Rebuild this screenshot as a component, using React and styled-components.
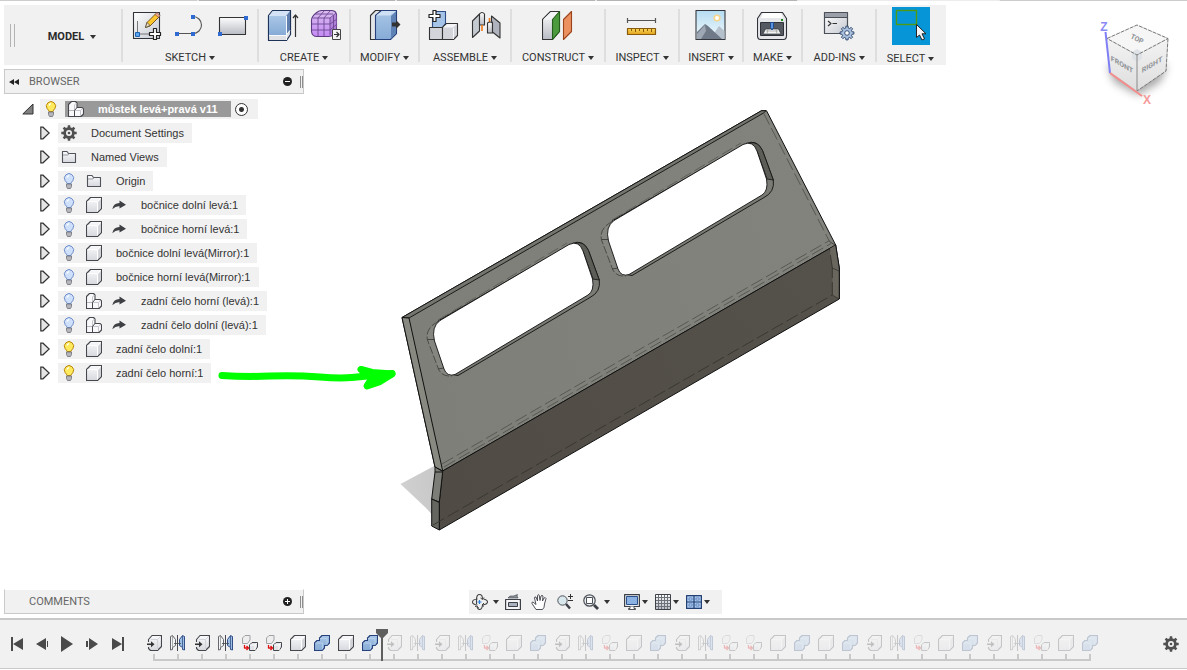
import React from 'react';
import styled, { createGlobalStyle, css } from 'styled-components';

const GlobalStyle = createGlobalStyle`
  * { box-sizing: border-box; }
  body {
    margin: 0;
    background: #fff;
    color: #333;
    font-family: Roboto, "Liberation Sans", sans-serif;
    font-size: 11px;
    line-height: 14px;
  }
  ul, ol { list-style: none; margin: 0; padding: 0; }
  svg { display: block; flex: none; }
`;

const panelGrey = '#f1f1f1';
const lineGrey = '#c9c9c9';

/* ---------- layout ---------- */

const Page = styled.div`
  position: relative;
  display: flex;
  flex-direction: column;
  min-height: 100vh;
  overflow: hidden;
`;

const TabStrip = styled.div`
  display: flex;
  gap: 2px;
  height: 1px;
  margin-bottom: 4px;
  background: #e6e6e6;
`;

const TabEdge = styled.div`
  flex: ${(p) => p.$grow} 1 0;
  background: ${(p) => p.$color};
`;

const plainButton = css`
  display: flex;
  align-items: center;
  justify-content: center;
  margin: 0;
  padding: 0;
  border: 0;
  background: none;
  color: inherit;
  font: inherit;
  cursor: pointer;
`;

const Toolbar = styled.header`
  display: flex;
  align-self: flex-start;
  height: 60px;
  margin-left: 4px;
  padding-right: 2px;
  background: ${panelGrey};
`;

const Grip = styled.span`
  width: 5px;
  height: ${(p) => p.$h}px;
  border: solid #b4b4b4;
  border-width: 0 1px;
`;

const Workspaces = styled.div`
  display: flex;
  align-items: center;
  width: 117px;
  padding-left: 6px;
`;

const WorkspaceButton = styled.button`
  ${plainButton}
  flex: 1;
  gap: 6px;
  padding: 3px 0 0 8px;
  color: #2b2b2b;
  font-weight: 700;
`;

const Group = styled.section`
  position: relative;
  display: flex;
  flex-direction: column;
  align-items: center;
  gap: 7px;
  width: ${(p) => p.$w}px;
  padding: 2px 0 0 2px;

  &::before {
    content: '';
    position: absolute;
    left: 0;
    top: 4px;
    width: 2px;
    height: 53px;
    background: #dedede;
  }
`;

const Tools = styled.div`
  display: flex;
  height: 38px;
`;

const ToolButton = styled.button`
  ${plainButton}
  width: ${(p) => (p.$active ? 38 : 43)}px;
  background: ${(p) => (p.$active ? '#0696d7' : 'none')};
`;

const MenuButton = styled.button`
  ${plainButton}
  gap: 3px;
  color: #333;
`;

const CaretShape = styled.span`
  width: 0;
  height: 0;
  border: 3px solid transparent;
  border-top: 4px solid #333;
  border-bottom: 0;
`;

const Viewport = styled.main`
  position: relative;
  display: flex;
  flex: 1;
  flex-direction: column;
  padding: 4px 0 4px 4px;
`;

const Scene = styled.svg`
  position: absolute;
  left: ${(p) => p.$x}px;
  top: ${(p) => p.$y}px;
  pointer-events: none;
`;

const ViewCube = styled.svg`
  position: absolute;
  right: 7px;
  top: 10px;
`;

const Panel = styled.div`
  display: flex;
  align-items: center;
  width: 300px;
  height: 25px;
  padding-left: 24px;
  border: 1px solid ${lineGrey};
  border-top-color: ${(p) => (p.$open ? 'transparent' : lineGrey)};
  background: ${panelGrey};
  background-clip: padding-box;
  color: #666;
`;

const CollapseButton = styled.button`
  ${plainButton}
  width: 24px;
  margin-left: -24px;
  padding-right: 6px;
`;

const RoundButton = styled.button`
  ${plainButton}
  margin: 0 8px 0 auto;
`;

const PanelGrip = styled(Grip)`
  width: 3px;
  border-color: #8e8e8e;
`;

const Tree = styled.ul`
  display: flex;
  flex-direction: column;
  gap: 4px;
  padding: 5px 0 0 18px;
  font-family: "Liberation Sans", Arial, sans-serif;
`;

const TreeRow = styled.li`
  display: flex;
  align-items: center;
  height: 20px;
  padding-left: ${(p) => (p.$root ? 0 : 18)}px;
`;

const Toggle = styled.button`
  ${plainButton}
  justify-content: flex-start;
  width: 18px;
`;

const RowBody = styled.div`
  display: flex;
  align-items: center;
  gap: 3px;
  height: 20px;
  padding-right: 8px;
  background: ${panelGrey};
`;

const Slot = styled.span`
  display: flex;
  justify-content: center;
  width: 22px;
`;

const RowLabel = styled.span`
  margin-left: 8px;
  white-space: nowrap;
`;

const ActiveName = styled.div`
  display: flex;
  align-items: center;
  gap: 11px;
  height: 16px;
  padding-right: 13px;
  background: #999;
  color: #fff;
  font-weight: 700;
  white-space: nowrap;
`;

const ActiveRadio = styled.input`
  appearance: none;
  width: 13px;
  height: 13px;
  margin: 0 2px 0 1px;
  border: 1px solid #333;
  border-radius: 50%;
  background: radial-gradient(circle, #333 0 2px, #fff 3px);
`;

const BottomRow = styled.div`
  display: grid;
  grid-template-columns: 1fr auto 1fr;
  align-items: end;
  margin-top: auto;
`;

const NavBar = styled.nav`
  display: flex;
  align-items: center;
  height: 24px;
  padding: 0 12px 0 3px;
  background: ${panelGrey};
`;

const NavButton = styled.button`
  ${plainButton}
  gap: ${(p) => p.$gap || 0}px;
  margin-left: ${(p) => p.$before || 0}px;
`;

const Timeline = styled.footer`
  display: flex;
  align-items: stretch;
  height: 51px;
  margin-bottom: 1px;
  padding: 0 8px 0 4px;
  border-top: 2px solid ${lineGrey};
  border-bottom: 1px solid ${lineGrey};
  background: ${panelGrey};
`;

const Playback = styled.div`
  display: flex;
  width: 138px;
`;

const PlayButton = styled.button`
  ${plainButton}
  width: 25px;
`;

const Features = styled.ol`
  display: flex;
  flex: 1;
  padding-top: 15px;
`;

const Feature = styled.li`
  position: relative;
  display: flex;
  flex-direction: column;
  align-items: center;
  width: 24px;

  & > svg:first-child { opacity: ${(p) => (p.$future ? 0.25 : 1)}; }
`;

const Tick = styled.span`
  width: 2px;
  height: 5px;
  margin-top: 3px;
  background: ${lineGrey};
`;

const Track = styled.span`
  align-self: stretch;
  height: 2px;
  margin-left: ${(p) => (p.$first ? 11 : 0)}px;
  margin-right: ${(p) => (p.$last ? 11 : 0)}px;
  background: ${lineGrey};
`;

const Marker = styled.svg`
  position: absolute;
  right: -6px;
  top: -6px;
  z-index: 1;
`;

const SettingsButton = styled.button`
  ${plainButton}
  width: 17px;
`;

/* ---------- gradients shared by the icons ---------- */

const Gradients = () => (
  <svg width="0" height="0" style={{ position: 'absolute' }} aria-hidden="true">
    <defs>
      <linearGradient id="steel" x1="0" y1="0" x2="0" y2="1">
        <stop offset="0" stopColor="#fdfdfd" /><stop offset="1" stopColor="#b9bcc4" />
      </linearGradient>
      <linearGradient id="page" x1="0" y1="0" x2="1" y2="1">
        <stop offset="0" stopColor="#fff" /><stop offset="1" stopColor="#c4c8d0" />
      </linearGradient>
      <linearGradient id="blue" x1="0" y1="0" x2="0" y2="1">
        <stop offset="0" stopColor="#a9c6e6" /><stop offset="1" stopColor="#86abd6" />
      </linearGradient>
      <linearGradient id="soft" x1="0" y1="0" x2="0" y2="1">
        <stop offset="0" stopColor="#fbfbfc" /><stop offset="1" stopColor="#d6d8de" />
      </linearGradient>
      <linearGradient id="sky" x1="0" y1="0" x2="0" y2="1">
        <stop offset="0" stopColor="#b5dcf2" /><stop offset="1" stopColor="#f4fafc" />
      </linearGradient>
      <linearGradient id="purple" x1="0" y1="0" x2="0" y2="1">
        <stop offset="0" stopColor="#d9bdf0" /><stop offset="1" stopColor="#c58af5" />
      </linearGradient>
      <linearGradient id="gold" x1="0" y1="0" x2="0" y2="1">
        <stop offset="0" stopColor="#fbd75c" /><stop offset="1" stopColor="#e0a21a" />
      </linearGradient>
    </defs>
  </svg>
);

const Caret = () => <CaretShape aria-hidden="true" />;

const Big = ({ children }) => (
  <svg width="32" height="32" viewBox="0 0 32 32" fill="none" strokeLinejoin="round">{children}</svg>
);
const Small = ({ children, w = 16 }) => (
  <svg width={w} height="16" viewBox={`0 0 ${w} 16`} fill="none" strokeLinejoin="round">{children}</svg>
);

const plus = 'M22.500 18.500h3v4h4v3h-4v4h-3v-4h-4v-3h4z';

function gearPath(cx, cy, outer, inner, teeth) {
  const pts = [];
  const step = (Math.PI * 2) / teeth;
  for (let i = 0; i < teeth; i += 1) {
    const a = i * step - Math.PI / 2;
    [[-0.3, inner], [-0.2, outer], [0.2, outer], [0.3, inner]].forEach(([o, r]) => {
      pts.push(`${(cx + r * Math.cos(a + o * step)).toFixed(2)} ${(cy + r * Math.sin(a + o * step)).toFixed(2)}`);
    });
  }
  return `M${pts.join('L')}Z`;
}

/* ---------- toolbar icons ---------- */

const NewSketch = () => (
  <Big>
    <rect x="2.5" y="2.5" width="26" height="26" fill="url(#page)" stroke="#2f3238" strokeWidth="1.1" />
    <path d="M6.500 11v13h14" stroke="#777" />
    <rect x="4.500" y="22.500" width="4" height="4" fill="#58a6ec" stroke="#1f62b5" />
    <path d="M14.500 17.500l1.500-5L25 3.500l3.500 3-9.500 9.500z" fill="#fbc62e" stroke="#6b4a12" strokeWidth=".9" />
    <path d="M24 4.500l3.500 3 1.500-2-3-3z" fill="#e6a58c" stroke="#7a4a3a" strokeWidth=".6" />
    <path d="M14.500 17.500l1.500-5 3 3z" fill="#f2e0c0" stroke="#444" strokeWidth=".7" />
    <path d={plus} fill="#fff" stroke="#222" strokeWidth="1.200" />
  </Big>
);
const ArcTool = () => (
  <Big>
    <path d="M3 23.500h16a8.500 8.500 0 0 0 0-17" stroke="#555" strokeWidth="1.100" />
    <path d="M17 5h4v4h-4zM17 22h4v4h-4zM1 22h4v4H1z" fill="#2f6bd0" />
  </Big>
);
const RectTool = () => (
  <Big>
    <rect x="2.500" y="7.500" width="26" height="17" fill="url(#steel)" stroke="#333" strokeWidth="1.100" />
    <path d="M27 6h4v4h-4zM1 22h4v4H1z" fill="#2f6bd0" />
  </Big>
);
const Extrude = () => (
  <Big>
    <path d="M1.500 30.500V5.500l4-5h18v24l-4 6z" fill="#dfe1e5" stroke="#1f3358" strokeWidth="1.200" />
    <path d="M2 25V6h17v19z" fill="url(#blue)" />
    <path d="M2 6l4-5h17l-4 5z" fill="#d3e2f4" />
    <path d="M19 6l4-5v19l-4 5z" fill="#5f7fae" />
    <path d="M2 25.500h17l4-5M19.500 6v24" stroke="#f6f8fb" />
    <path d="M28.500 27V5M26 8l2.500-3L31 8" stroke="#333" strokeWidth="1.200" />
  </Big>
);
const Form = () => (
  <Big>
    <path d="M1.500 10Q2 6 6 3 9 .5 12 .5h9q5 0 5.500 4v14q0 4-3 6-2 2-5 2H7q-5 0-5.500-5z" fill="url(#purple)" stroke="#5b3a80" strokeWidth="1.100" />
    <path d="M20 9l6-6q2 9 0 17l-6 5z" fill="#a06cc9" opacity=".6" />
    <path d="M2 14h18l7-5M2 20h18l7-6M8 26V8l6-7M14 26V8l6-7M3 8h17v17M20 8l6-5M5 4h18M23.500 5v18" stroke="#6b4792" strokeWidth=".9" />
    <rect x="22.500" y="19.500" width="8" height="10" fill="#f4f4f4" stroke="#444" />
    <path d="M24 24.500h5M26.500 22l2.500 2.500-2.500 2.500" stroke="#333" strokeWidth="1.200" />
  </Big>
);
const PressPull = () => (
  <Big>
    <path d="M1.500 29.500V5.500l5-5h6l-5 5v24z" fill="#e2e4e8" stroke="#333" strokeWidth="1.100" />
    <path d="M6.500 29.500V5.500l6-5h15v23l-6 6z" fill="url(#blue)" stroke="#25407a" strokeWidth="1.100" />
    <path d="M7 5.500l6-4.500h14l-6 4.500z" fill="#cfe0f5" />
    <path d="M22 6l5-4.500V23l-5 6z" fill="#5f82b6" />
    <path d="M23 12.500h4V10l4.500 4.500L27 19v-2.500h-4z" fill="#333" />
  </Big>
);
const NewComponent = () => (
  <Big>
    <path d="M4.500 17.500V4.500l4-3h9v12l-3 4z" fill="#a5c4e8" stroke="#2c4d86" strokeWidth="1.100" />
    <path d="M1.500 29.500V17.500h13v12z" fill="#d3d5db" stroke="#333" strokeWidth="1.100" />
    <path d="M14.500 29.500V17.500l4-4h11v12l-4 4z" fill="#d3d5db" stroke="#333" strokeWidth="1.100" />
    <path d="M15 17.500l4-3.500h10l-4 3.500z" fill="#f5f5f7" />
    <path d="M25.500 18v11" stroke="#f5f5f7" />
    <path d="M5 .5h3v4h4v3H8v4H5v-4H1v-3h4z" fill="#fff" stroke="#222" strokeWidth="1.200" />
  </Big>
);
const Joint = () => (
  <Big>
    <path d="M1.500 27.500V11l7-7v17z" fill="#c5c9d0" stroke="#333" strokeWidth="1.100" />
    <path d="M8.500 15V4q2.500-3 5 0v11z" fill="url(#steel)" stroke="#333" strokeWidth="1.100" />
    <path d="M11 15v6M18.500 8v7" stroke="#f07a1a" strokeWidth="1.600" />
    <path d="M16.500 23V13q2.500-2 5 0v10z" fill="url(#steel)" stroke="#333" strokeWidth="1.100" />
    <path d="M20.500 11V6l8.500 7v15l-7.500-6v-9z" fill="#aeb3bd" stroke="#333" strokeWidth="1.100" />
  </Big>
);
const OffsetPlane = () => (
  <Big>
    <path d="M.5 29.500V9.500l8-8h9v20l-7 8z" fill="url(#steel)" stroke="#333" strokeWidth="1.100" />
    <path d="M1 9.500l8-7.500h8l-7 7.500z" fill="#f4f5f7" />
    <path d="M10.500 29.500V9.500l7-8v20z" fill="#4c9a3e" stroke="#245c1b" strokeWidth="1.100" />
    <path d="M21.500 29.500V9.500l8-8v20z" fill="#ec9060" stroke="#9b441c" strokeWidth="1.100" />
  </Big>
);
const Measure = () => (
  <Big>
    <path d="M1.500 10.500h28M1.500 8v5M29.500 8v5" stroke="#555" strokeWidth="1.200" />
    <rect x="1.500" y="18.500" width="28" height="6" fill="url(#gold)" stroke="#8a5a0c" strokeWidth="1.200" />
    <path d="M5.500 19v2M9.500 19v3M13.500 19v2M17.500 19v3M21.500 19v2M25.500 19v3" stroke="#8a5a0c" />
  </Big>
);
const InsertImage = () => (
  <Big>
    <rect x="1" y=".5" width="29" height="29" fill="url(#sky)" stroke="#33373d" strokeWidth="1.100" />
    <circle cx="22" cy="8" r="2.800" fill="#fff" stroke="#f8d58a" strokeWidth="1.600" />
    <path d="M15 29L24 16l5.500 5v8z" fill="#b4c0cc" />
    <path d="M2 22l8-8 3 2 14 13H2z" fill="#6f7988" />
    <path d="M2 24l8-9 1 6-5 8H2z" fill="#9ea7b4" />
  </Big>
);
const Printer = () => (
  <Big>
    <path d="M.5 8.500L4.500 2.500h21l4 6v17q0 4-3 4h-23q-3 0-3-4z" fill="#e4e6ea" stroke="#2f3238" strokeWidth="1.100" />
    <path d="M4 8l2-5h18l2 5z" fill="#fff" />
    <rect x="3.500" y="12.500" width="23" height="13" fill="#555a62" stroke="#2f3238" />
    <path d="M6 24l2.500-5h13l2.500 5z" fill="#f2f3f5" stroke="#30343a" strokeWidth=".7" />
    <path d="M9 21h12M11 19l-1 5M19 19l1 5" stroke="#999" strokeWidth=".7" />
    <path d="M13.500 12.500h3v5l-1.500 2.500-1.500-2.500z" fill="#5b94de" stroke="#1e4c92" />
    <rect x="24" y="9" width="2" height="2" fill="#1b8a1b" />
  </Big>
);
const Scripts = () => (
  <Big>
    <rect x="1.500" y="2.500" width="23" height="21" fill="url(#page)" stroke="#4a4f58" strokeWidth="1.200" />
    <path d="M2 3h22v4H2z" fill="#9a9fa8" />
    <path d="M2 7.500h22" stroke="#4a4f58" />
    <path d="M5 11l3 2.500L5 16M9.500 13.500H14" stroke="#333" strokeWidth="1.100" />
    <path d={gearPath(24, 23, 7, 5.2, 8)} fill="#a9c0de" stroke="#2d4468" strokeWidth=".9" />
    <circle cx="24" cy="23" r="2.300" fill="#fff" stroke="#2d4468" strokeWidth=".9" />
  </Big>
);
const SelectIcon = () => (
  <svg width="38" height="38" viewBox="0 0 38 38">
    <rect x="4.500" y="3.500" width="20" height="14" fill="none" stroke="#4f9a12" strokeWidth="1.400" />
    <path d="M24.500 17.500v13l3-2.500 2.500 5 2.500-1.200-2.500-5h4z" fill="#f4f4f6" stroke="#222" />
  </svg>
);

/* ---------- small icons ---------- */

const boxOutline = 'M.5 4.500L4.500.5h11v11l-4 4H.5z';

const BoxIcon = () => (
  <Small>
    <path d={boxOutline} fill="url(#soft)" stroke="#45474c" strokeWidth="1.100" />
    <path d="M1.500 4.500h10v10M11.500 4.500l3-3" stroke="#fff" />
    <path d="M12.200 5L15 2v9l-2.800 3z" fill="#d0d2d8" />
  </Small>
);
const PartsIcon = ({ w = 16 }) => (
  <Small w={w}>
    <path d="M.5 15.500V3.500l3-3h4l1.500 1.500v4.500h5l1.500 1.500v5l-2.500 2.500z" fill="#f9f9fb" stroke="#45474c" strokeWidth="1.100" />
    <path d="M1 9.500h5.500" stroke="#b4b6bc" />
    <path d="M6.500 15V4l2-2" stroke="#c4c6cc" />
    <path d="M9 6.500L6.500 9.500V15" stroke="#45474c" />
    <path d="M7 9.500h5.500V15M12.500 9.500l2-2" stroke="#c4c6cc" />
  </Small>
);
const Bulb = ({ on }) => (
  <svg width="12" height="16" viewBox="0 0 12 16" fill="none">
    <path d="M4 10.500Q3.800 9 2.200 7.800A4.600 4.600 0 1 1 9.800 7.800Q8.200 9 8 10.500z" fill={on ? '#ffe95c' : '#cfe0fb'} stroke={on ? '#b8860b' : '#6f8fc9'} />
    <path d="M4 4.500q.5-1.500 2-1.800" stroke="#fff" strokeWidth="1.200" />
    <path d="M3.500 11h5v2.500L7.500 15.500h-3l-1-2z" fill="#b4b6bb" stroke="#6d6f76" strokeWidth=".8" />
  </svg>
);
const Folder = () => (
  <Small>
    <path d="M1.500 13.500V2.500h4.500l1.500 2h7v9z" fill="url(#soft)" stroke="#50535a" strokeWidth="1.100" />
    <path d="M2 6h5l1-1.500" stroke="#8d9098" strokeWidth=".9" />
  </Small>
);
const Gear = () => (
  <Small>
    <path d={`${gearPath(8, 8, 7.8, 5.8, 8)}M8 5a3 3 0 1 0 0 6 3 3 0 0 0 0-6z`} fill="#505050" fillRule="evenodd" />
    <circle cx="8" cy="8" r="1.300" fill="#505050" />
  </Small>
);
const LinkArrow = () => (
  <svg width="14" height="10" viewBox="0 0 14 10"><path d="M.3 9.200Q1.500 3 7.500 3V.5L14 4.800 7.500 8.500V6.300Q3.500 6 .3 9.200z" fill="#3f4044" /></svg>
);
const Closed = () => (
  <svg width="10" height="14" viewBox="0 0 10 14"><path d="M.8 1.200h2.200L9.200 7 3 12.800H.8z" fill="#e6e6e6" stroke="#333" strokeWidth="1.200" /></svg>
);
const Opened = () => (
  <svg width="12" height="12" viewBox="0 0 12 12"><path d="M11 1v10H.8z" fill="#808080" stroke="#333" /></svg>
);

const InsertStep = () => (
  <Small>
    <path d="M2.500 7V4.500L6 .5h9.500v11l-4 4h-7l-2-2V12" fill="url(#soft)" stroke="#45474c" strokeWidth="1.100" />
    <path d="M11.500 15V4.500H5M11.500 4.500L15 1" stroke="#d2d4d9" />
    <path d="M1 8.500h4V6.200l3.500 3-3.500 3v-2.200H1z" fill="#333" />
  </Small>
);
const MirrorStep = () => (
  <Small>
    <path d="M.5 15V1.500L2.500.5l3 4v6l-3 2v2z" fill="#f3f4f6" stroke="#55575c" strokeWidth=".9" />
    <path d="M2.500 1v11" stroke="#888" strokeWidth=".7" />
    <path d="M7.500 0v16" stroke="#45474c" />
    <path d="M14.500 15V1.500L12.500.5l-3 4v6l3 2v2z" fill="#9dbfe6" stroke="#25407a" strokeWidth=".9" />
    <path d="M12.500 1v11" stroke="#25407a" strokeWidth=".7" />
    <path d="M4 8.500h7" stroke="#45474c" strokeWidth=".8" />
  </Small>
);
const MoveStep = () => (
  <Small>
    <path d="M.5 8.500V3L3 .5h5V5L5.500 8.500z" fill="#eeeeef" stroke="#a0a2a6" />
    <path d="M7.500 15.500V10L10 7.500h5.500V12L13 15.500z" fill="#e0e2e6" stroke="#45474c" />
    <path d="M8 10h5v5M13 10l2-2" stroke="#fff" />
    <path d="M2.500 10v3h3M4.500 11l2 2-2 2" stroke="#e00f0f" strokeWidth="1.300" />
  </Small>
);
const JoinStep = () => (
  <Small>
    <path d="M.5 15.500V8L3 5.500h2.500V3L8 .5h7.500V8L13 10.500h-2.500V13L8 15.500z" fill="url(#blue)" stroke="#25407a" strokeWidth="1.100" />
    <path d="M1.500 8h7v6.500M6 3.500h7V10" stroke="#c2d7ef" strokeWidth=".7" />
  </Small>
);

/* ---------- navigation icons ---------- */

const Orbit = () => (
  <Small>
    <path d="M5.500 11Q.5 10.500.5 8t5-3M11.500 5q4 .8 4 3t-5 3" stroke="#444" strokeWidth="1.100" />
    <path d="M4.500 10V6q0-5.500 3-5.500T10.500 5M10.500 11q-.5 4.500-3 4.500-1.500 0-2.500-2.500" stroke="#444" strokeWidth="1.100" />
    <path d="M8.500 4l2 1.500L12 3.500M12 9l-2 2 2 1.500M3 12.500l2-.5 1.500 2" stroke="#444" />
    <path d="M7.500 6v4M5.500 8h4" stroke="#2f7fd6" strokeWidth="1.200" />
  </Small>
);
const LookAt = () => (
  <Small>
    <rect x=".6" y="5.500" width="14.800" height="10" fill="#f6f6f8" stroke="#3d4047" strokeWidth="1.200" />
    <rect x="3.500" y="8.500" width="9" height="4" fill="#a9b1bf" stroke="#3d4047" />
    <path d="M3 4l2-2h3.500l4-1.500L12 2l1 2z" fill="#8d929c" stroke="#3d4047" strokeWidth=".6" />
  </Small>
);
const Hand = () => (
  <Small>
    <path d="M5 15.500L1 9.500Q.5 8 2 8l3 2.500L3.500 4Q3.500 2.500 5 3l1.500 4L6.500 1.500Q7 0 8.200 1.200L9 6.500l1-4.500q1-1.200 2 0L11.500 7l1.500-3q1.500-1 2 .5L13.500 10Q13.500 14 11.500 15.500z" fill="#fff" stroke="#3d4047" strokeWidth=".9" />
  </Small>
);
const ZoomIcon = () => (
  <Small>
    <circle cx="5.500" cy="6.500" r="4.700" fill="#d8e8ec" stroke="#4d5057" />
    <path d="M9 10l4 4.500" stroke="#3d4047" strokeWidth="2.500" />
    <path d="M13.500 0v5M11 2.500h5M11 6.500h5" stroke="#333" />
  </Small>
);
const FitIcon = () => (
  <Small>
    <circle cx="6.500" cy="6.500" r="5.700" fill="#e9eff0" stroke="#4d5057" strokeWidth="1.200" />
    <rect x="3.500" y="3.500" width="6" height="6" fill="#fff" stroke="#4d5057" />
    <path d="M11 11l4 4" stroke="#3d4047" strokeWidth="2.800" />
  </Small>
);
const Display = () => (
  <Small>
    <rect x=".6" y=".6" width="14.800" height="11.900" fill="#eceef2" stroke="#3d4047" strokeWidth="1.200" />
    <rect x="2.500" y="2.500" width="11" height="8" fill="#8cb2e4" stroke="#2c508c" />
    <path d="M6 12.500v2H4.500v1h7v-1H10v-2" fill="#fff" stroke="#3d4047" strokeWidth=".9" />
  </Small>
);
const GridIcon = () => (
  <Small>
    <rect x=".5" y=".5" width="15" height="15" fill="url(#steel)" stroke="#3d4047" />
    <path d="M3.500 1v14M6.500 1v14M9.500 1v14M12.500 1v14M1 3.500h14M1 6.500h14M1 9.500h14M1 12.500h14" stroke="#6d717a" />
  </Small>
);
const Viewports = () => (
  <Small>
    <rect x=".6" y="1.600" width="14.800" height="12.800" fill="#a9c8ee" stroke="#243f73" strokeWidth="1.200" />
    <path d="M8 2v12M1 8h14" stroke="#243f73" strokeWidth="1.200" />
    <path d="M3 4h3v2H3zM10 4h3v2h-3zM3 10h3v2H3zM10 10h3v2h-3z" fill="#d9e8fb" stroke="#4a74b5" strokeWidth=".8" />
  </Small>
);

/* ---------- model drawing ---------- */

const SlotCutout = ({ x = 0, y = 0 }) => (
  <g transform={`translate(${x} ${y})`}>
    <path d="M438 321L572 243.500Q583 239 588.500 250.500L599.300 280Q601 292 590 297.500L458 375.500L450 374Z" fill="#7a7b74" stroke="#111" strokeWidth=".9" />
    <path d="M576 243Q584 241 588.500 250.500L599.300 280L593 279L583 251Z" fill="#5c5d57" stroke="#111" strokeWidth=".8" />
    <path d="M438.500 321.500Q425 328 427.500 340L438.500 369Q442 377 452 376" fill="#858680" stroke="#3d3e3a" strokeWidth=".8" strokeDasharray="8 2" />
    <path d="M427.500 339.500h7M438 369l6-1" stroke="#333" strokeWidth=".8" />
    <path d="M440 320.500L569 244.500Q579 240 583 251L592.500 279Q594.500 291 588 295L455 374.500Q447 377 444 369L434.500 341Q431 327 440 320.500Z" fill="#fff" stroke="#111" strokeWidth=".9" />
    <path d="M438 320L567 243" stroke="#5a5b56" strokeWidth=".9" strokeDasharray="12 4" />
  </g>
);

const Model = () => (
  <Scene $x={396} $y={35} width="450" height="440" viewBox="396 100 450 440" fill="none" strokeLinejoin="round" role="img" aria-label="Part">
    <defs>
      <linearGradient id="face" x1="402" y1="320" x2="835" y2="240" gradientUnits="userSpaceOnUse">
        <stop offset="0" stopColor="#7e7f78" /><stop offset=".5" stopColor="#80817a" /><stop offset="1" stopColor="#82837c" />
      </linearGradient>
      <linearGradient id="flange" x1="440" y1="500" x2="839" y2="270" gradientUnits="userSpaceOnUse">
        <stop offset="0" stopColor="#504c45" /><stop offset="1" stopColor="#55524b" />
      </linearGradient>
      <linearGradient id="floor" x1="402" y1="484" x2="436" y2="480" gradientUnits="userSpaceOnUse">
        <stop offset="0" stopColor="#d0d0d0" /><stop offset="1" stopColor="#c8c8c8" />
      </linearGradient>
    </defs>
    <path d="M400.500 484L436 465V519L426 508Z" fill="url(#floor)" />
    <path d="M402 317.500L761.500 110.700H766.500L835.700 245L442.700 471L435 467Z" fill="url(#face)" stroke="#111" />
    <path d="M402 317.500L761.500 110.700H766L763.500 113L409 318Z" fill="#74756e" stroke="#111" strokeWidth=".9" />
    <path d="M402 317.500L409 318L442.700 471L435 467Z" fill="#888981" stroke="#111" />
    <path d="M442.700 471L835.700 245L839.300 268V299L439.300 530L439.300 502Z" fill="url(#flange)" stroke="#111" />
    <path d="M835.700 245L839.300 268V299L832.500 295V268L829.500 249Z" fill="#69665e" />
    <path d="M835.700 245L839.300 268V299" stroke="#111" />
    <path d="M435 467L442.700 471.500L439.300 502L431.700 499L435 472Z" fill="#7c7d76" stroke="#111" />
    <path d="M431.700 499L439.300 502.500V530L431.700 526Z" fill="#65665f" stroke="#111" />
    <path d="M435 472h7" stroke="#111" />
    <path d="M442 464L620 360.700L829.500 240.500M444 467L620 365.300L831 243.500M763.500 113L829.500 241.500" stroke="#52534d" strokeWidth=".9" strokeDasharray="13 4" />
    <path d="M433 525L620 416.700L832.300 295M832.300 295V268M832.300 268L829.500 249" stroke="#37342f" strokeWidth=".9" strokeDasharray="13 4" />
    <path d="M832.300 268L839 271M832.300 295L839 299M829.500 241.500L835 245" stroke="#37342f" strokeWidth=".8" />
    <SlotCutout />
    <SlotCutout x={174} y={-100} />
  </Scene>
);

const GreenArrow = () => (
  <Scene $x={214} $y={295} width="186" height="34" viewBox="214 360 186 34" fill="none" stroke="#00ff00" strokeLinecap="round" strokeLinejoin="round">
    <path d="M222 375.500Q245 377 270 376T320 377Q345 379 362 376.500L392 373.500" strokeWidth="7" />
    <path d="M361 369.500L372 372.500L392 374L379 382L367 386L372 378Z" fill="#00ff00" strokeWidth="7" />
  </Scene>
);

const Cube = () => (
  <ViewCube width="80" height="100" viewBox="1100 10 80 100" role="img" aria-label="View cube">
    <defs>
      <filter id="cubeShade" x="-30%" y="-30%" width="160%" height="160%"><feGaussianBlur stdDeviation="4" /></filter>
      <linearGradient id="cubeFace" x1="0" y1="0" x2="0" y2="1">
        <stop offset="0" stopColor="#f3f3f3" /><stop offset="1" stopColor="#dedede" />
      </linearGradient>
    </defs>
    <path d="M1108 66L1137 56 1167 66 1160 82 1138 95 1114 82Z" fill="#888" opacity=".75" filter="url(#cubeShade)" />
    <path d="M1107 38.500L1137 55V91L1110 72Z" fill="url(#cubeFace)" />
    <path d="M1137 55L1168 38.500L1166 71L1137 91Z" fill="url(#cubeFace)" />
    <path d="M1107 38.500L1137 25L1168 38.500L1137 55Z" fill="#f6f6f6" />
    <path d="M1137 49l5 3v7l-5 3-5-3v-7z" fill="#dfe3e8" />
    <path d="M1107 38.500L1137 25L1168 38.500L1137 55ZM1168 38.500L1166 71L1137 91" fill="none" stroke="#777" strokeDasharray="4 1" />
    <path d="M1137 55V91" stroke="#8a8a8a" />
    <path d="M1110 73L1105.500 32" stroke="#7f7ff5" strokeWidth="2" />
    <path d="M1110 73L1142 96" stroke="#f58c8c" strokeWidth="2" />
    <g fontFamily="Roboto, sans-serif" fontWeight="700" fontSize="7" textAnchor="middle" fill="#8e9297">
      <text transform="translate(1122 67) skewY(30)">FRONT</text>
      <text transform="translate(1152 67) skewY(-30)">RIGHT</text>
      <text transform="translate(1136 41) rotate(26)">TOP</text>
    </g>
    <g fontFamily="Liberation Sans, sans-serif" fontWeight="700" fontSize="12" textAnchor="middle">
      <text x="1104" y="31" fill="#8a8af5">Z</text>
      <text x="1147" y="104" fill="#f59a9a">X</text>
    </g>
  </ViewCube>
);

/* ---------- data ---------- */

const groups = [
  { name: 'SKETCH', w: 136, tools: [NewSketch, ArcTool, RectTool] },
  { name: 'CREATE', w: 92, tools: [Extrude, Form] },
  { name: 'MODIFY', w: 69, tools: [PressPull] },
  { name: 'ASSEMBLE', w: 92, tools: [NewComponent, Joint] },
  { name: 'CONSTRUCT', w: 94, tools: [OffsetPlane] },
  { name: 'INSPECT', w: 74, tools: [Measure] },
  { name: 'INSERT', w: 64, tools: [InsertImage] },
  { name: 'MAKE', w: 59, tools: [Printer] },
  { name: 'ADD-INS', w: 74, tools: [Scripts] },
  { name: 'SELECT', w: 69, tools: [SelectIcon], active: true },
];

const off = () => <Bulb />;
const on = () => <Bulb on />;

const rows = [
  { label: 'Document Settings', icons: [Gear] },
  { label: 'Named Views', icons: [Folder] },
  { label: 'Origin', icons: [off, Folder] },
  { label: 'bočnice dolní levá:1', icons: [off, BoxIcon, LinkArrow] },
  { label: 'bočnice horní levá:1', icons: [off, BoxIcon, LinkArrow] },
  { label: 'bočnice dolní levá(Mirror):1', icons: [off, BoxIcon] },
  { label: 'bočnice horní levá(Mirror):1', icons: [off, BoxIcon] },
  { label: 'zadní čelo horní (levá):1', icons: [off, PartsIcon, LinkArrow] },
  { label: 'zadní čelo dolní (levá):1', icons: [off, PartsIcon, LinkArrow] },
  { label: 'zadní čelo dolní:1', icons: [on, BoxIcon] },
  { label: 'zadní čelo horní:1', icons: [on, BoxIcon] },
];

const navItems = [
  { name: 'Orbit', Icon: Orbit, gap: 5, menu: true },
  { name: 'Look at', Icon: LookAt, before: 6 },
  { name: 'Pan', Icon: Hand, before: 10 },
  { name: 'Zoom', Icon: ZoomIcon, before: 10 },
  { name: 'Fit', Icon: FitIcon, before: 10, gap: 5, menu: true },
  { name: 'Display settings', Icon: Display, before: 14, gap: 2, menu: true },
  { name: 'Grid and snaps', Icon: GridIcon, before: 7, gap: 2, menu: true },
  { name: 'Viewports', Icon: Viewports, before: 7, gap: 2, menu: true },
];

const playback = [
  { name: 'Go to start', d: 'M2 1h2v14H2zM14 2v12L4 8z' },
  { name: 'Step back', d: 'M12 2v12L2 8zM13 5h1v6h-1z' },
  { name: 'Play', d: 'M2 0v16L14 8z' },
  { name: 'Step forward', d: 'M5 2v12l9-6zM2 5h2v6H2z' },
  { name: 'Go to end', d: 'M13 1h2v14h-2zM3 2v12l10-6z' },
];

const stepIcons = { I: InsertStep, M: MirrorStep, V: MoveStep, B: BoxIcon, J: JoinStep };
const steps = 'IMIMVVBJBJIMIMVBJIMVBJIMVVBJBJIMVBJIMVBJ'.split('');
const playhead = 9;

/* ---------- application ---------- */

export default function App() {
  return (
    <Page>
      <GlobalStyle />
      <Gradients />
      <TabStrip>
        <TabEdge $grow={197} $color="#cdcdcd" />
        <TabEdge $grow={197} $color="#b4b4b4" />
        <TabEdge $grow={198} $color="#b4b4b4" />
        <TabEdge $grow={200} $color="#b4b4b4" />
        <TabEdge $grow={200} $color="#ececec" />
        <TabEdge $grow={187} $color="#cdcdcd" />
      </TabStrip>

      <Toolbar>
        <Workspaces>
          <Grip $h={23} />
          <WorkspaceButton type="button">MODEL <Caret /></WorkspaceButton>
        </Workspaces>
        {groups.map((g) => (
          <Group key={g.name} $w={g.w}>
            <Tools>
              {g.tools.map((Icon, i) => (
                <ToolButton key={i} type="button" $active={g.active} aria-label={`${g.name} ${i + 1}`}><Icon /></ToolButton>
              ))}
            </Tools>
            <MenuButton type="button">{g.name}<Caret /></MenuButton>
          </Group>
        ))}
      </Toolbar>

      <Viewport>
        <Model />
        <GreenArrow />

        <Panel>
          <CollapseButton type="button" aria-label="Collapse">
            <svg width="10" height="6" viewBox="0 0 10 6"><path d="M5 0v6L0 3zM10 0v6L5 3z" fill="#222" /></svg>
          </CollapseButton>
          BROWSER
          <RoundButton type="button" aria-label="Hide">
            <svg width="9" height="9" viewBox="0 0 9 9"><circle cx="4.500" cy="4.500" r="4.500" fill="#222" /><path d="M2 4.500h5" stroke="#fff" /></svg>
          </RoundButton>
          <PanelGrip $h={12} />
        </Panel>

        <Tree>
          <TreeRow $root>
            <Toggle type="button" aria-label="Collapse document"><Opened /></Toggle>
            <RowBody>
              <Slot><Bulb on /></Slot>
              <ActiveName><Slot><PartsIcon /></Slot>můstek levá+pravá v11</ActiveName>
              <ActiveRadio type="radio" name="active" aria-label="Activate component" defaultChecked />
            </RowBody>
          </TreeRow>
          {rows.map((row) => (
            <TreeRow key={row.label}>
              <Toggle type="button" aria-label={`Expand ${row.label}`}><Closed /></Toggle>
              <RowBody>
                {row.icons.map((Icon, i) => <Slot key={i}><Icon /></Slot>)}
                <RowLabel>{row.label}</RowLabel>
              </RowBody>
            </TreeRow>
          ))}
        </Tree>

        <BottomRow>
          <Panel $open>
            COMMENTS
            <RoundButton type="button" aria-label="Show comments">
              <svg width="9" height="9" viewBox="0 0 9 9"><circle cx="4.500" cy="4.500" r="4.500" fill="#222" /><path d="M2 4.500h5M4.500 2v5" stroke="#fff" /></svg>
            </RoundButton>
            <PanelGrip $h={12} />
          </Panel>
          <NavBar>
            {navItems.map(({ name, Icon, before, gap, menu }) => (
              <NavButton key={name} type="button" aria-label={name} $before={before} $gap={gap}>
                <Icon />{menu && <Caret />}
              </NavButton>
            ))}
          </NavBar>
        </BottomRow>
      </Viewport>

      <Timeline>
        <Playback>
          {playback.map((b) => (
            <PlayButton key={b.name} type="button" aria-label={b.name}>
              <Small><path d={b.d} fill="#4a4a4a" /></Small>
            </PlayButton>
          ))}
        </Playback>
        <Features>
          {steps.map((s, i) => {
            const Icon = stepIcons[s];
            return (
              <Feature key={i} $future={i > playhead}>
                <Icon />
                <Tick />
                <Track $first={i === 0} $last={i === steps.length - 1} />
                {i === playhead && (
                  <Marker width="12" height="32" viewBox="0 0 12 32"><path d="M0 0h12v4L7 9v23H5V9L0 4z" fill="#5f5f5f" /></Marker>
                )}
              </Feature>
            );
          })}
        </Features>
        <SettingsButton type="button" aria-label="Timeline settings"><Gear /></SettingsButton>
      </Timeline>

      <Cube />
    </Page>
  );
}
